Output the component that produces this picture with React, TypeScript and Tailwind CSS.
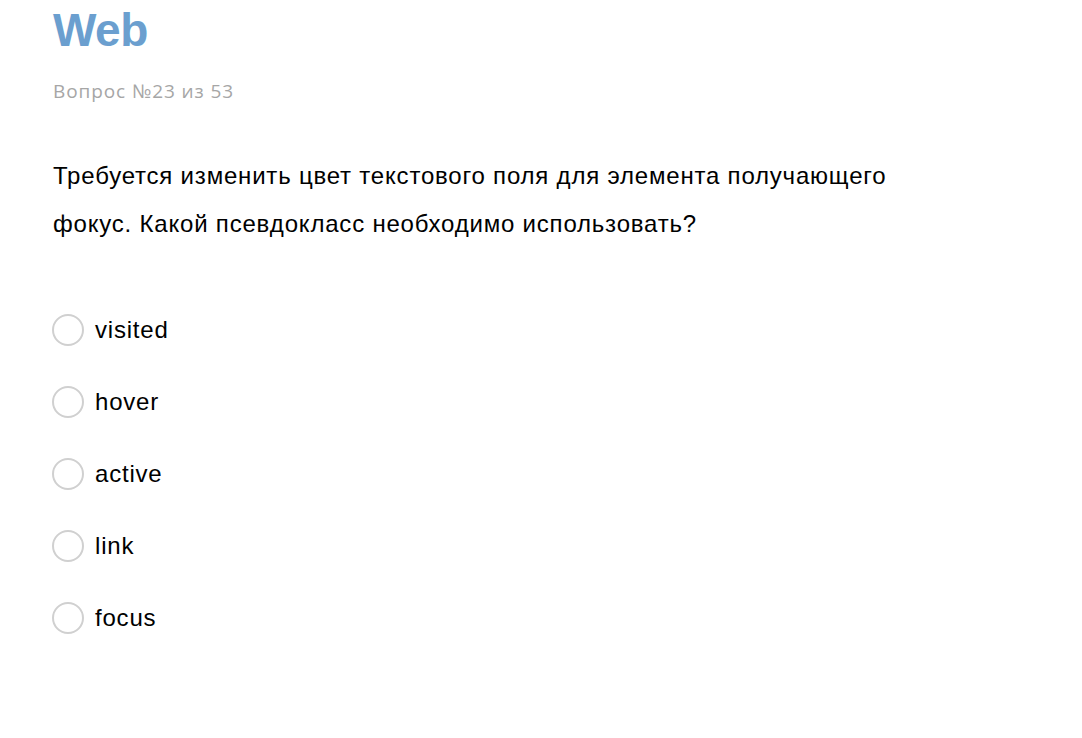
const options = ['visited', 'hover', 'active', 'link', 'focus']

export default function App() {
    return (
        <div className="min-h-[738px] bg-white px-[53px] pt-[2px]" style={{ fontFamily: '"Liberation Sans", Arial, sans-serif' }}>
            <h1 className="text-[46px] font-bold leading-[56px] tracking-[-0.5px] text-[#6b9fcf]">Web</h1>
            <div className="mt-[21px] text-[19px] leading-[24px] tracking-[0.9px] text-[#a6a6a6] font-['Open_Sans',sans-serif]">Вопрос №23 из 53</div>
            <p className="mt-[49px] w-[870px] text-[24px] leading-[48px] tracking-[0.8px] text-black">
                Требуется изменить цвет текстового поля для элемента получающего фокус. Какой псевдокласс необходимо использовать?
            </p>
            <div className="mt-[66px] flex flex-col gap-[40px]">
                {options.map((o) => (
                    <label key={o} className="flex items-center gap-[11px] h-[32px] -ml-[1px]">
                        <span className="w-[32px] h-[32px] rounded-full border-2 border-[#d0d0d0] bg-white" />
                        <span className="text-[24px] leading-[32px] tracking-[0.8px] text-black">{o}</span>
                    </label>
                ))}
            </div>
        </div>
    )
}
